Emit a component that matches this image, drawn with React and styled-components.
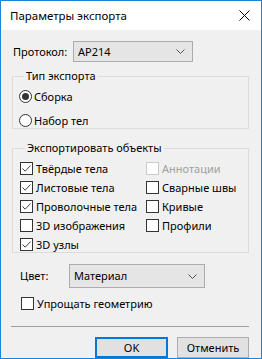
import React from "react";
import styled, { createGlobalStyle } from "styled-components";

const GlobalStyle = createGlobalStyle`
  html, body {
    margin: 0;
    padding: 0;
    background: #ffffff;
  }
  body {
    font-family: "Noto Sans", "Liberation Sans", sans-serif;
    font-size: 11px;
    color: #000000;
  }
  * {
    box-sizing: border-box;
  }
`;

const Window = styled.div`
  width: 262px;
  height: 359px;
  border: 1px solid #1883d7;
  background: #f0f0f0;
  display: flex;
  flex-direction: column;
`;

const TitleBar = styled.div`
  height: 29px;
  background: #ffffff;
  display: flex;
  align-items: center;
  justify-content: space-between;
  padding-left: 9px;
`;

const Title = styled.span`
  font-size: 11.5px;
  line-height: 16px;
`;

const CloseButton = styled.div`
  width: 34px;
  height: 29px;
  display: flex;
  align-items: center;
  justify-content: center;
`;

const Body = styled.div`
  padding: 10px 12px 0 10px;
  display: flex;
  flex-direction: column;
`;

const FieldRow = styled.div`
  display: flex;
  align-items: center;
  padding-left: ${(p) => p.$indent || 0}px;
  margin-top: ${(p) => p.$top || 0}px;
`;

const Label = styled.span`
  width: ${(p) => p.$width}px;
  line-height: 16px;
`;

const Select = styled.div`
  width: ${(p) => p.$width}px;
  height: ${(p) => p.$height}px;
  background: #e5e5e5;
  border: 1px solid #acacac;
  display: flex;
  align-items: center;
  justify-content: space-between;
  padding: 0 7px 0 4px;
  line-height: 16px;
`;

const Group = styled.fieldset`
  margin: ${(p) => p.$top}px 0 0 1px;
  padding: ${(p) => p.$pad};
  border: 1px solid #dcdcdc;
  min-width: 0;
  height: ${(p) => p.$height}px;
`;

const Legend = styled.legend`
  margin-left: 5px;
  padding: 0 2px;
  line-height: 16px;
`;

const Option = styled.label`
  display: flex;
  align-items: center;
  height: ${(p) => p.$height || 19}px;
  color: ${(p) => (p.$disabled ? "#a0a0a0" : "#000000")};
  white-space: nowrap;
`;

const RadioCircle = styled.span`
  width: 13px;
  height: 13px;
  border: 1px solid #333333;
  border-radius: 50%;
  background: #ffffff;
  display: flex;
  align-items: center;
  justify-content: center;
  margin-right: 2px;
  flex-shrink: 0;
  &::after {
    content: "";
    display: ${(p) => (p.$checked ? "block" : "none")};
    width: 7px;
    height: 7px;
    border-radius: 50%;
    background: #333333;
  }
`;

const Box = styled.span`
  width: 13px;
  height: 13px;
  border: 1px solid ${(p) => (p.$disabled ? "#cccccc" : "#333333")};
  background: #ffffff;
  display: flex;
  align-items: center;
  justify-content: center;
  margin-right: 3px;
  flex-shrink: 0;
`;

const CheckGrid = styled.div`
  display: grid;
  grid-template-columns: 126px 1fr;
  grid-auto-rows: 19px;
`;

const Separator = styled.div`
  height: 1px;
  background: #a0a0a0;
  margin: 13px 0 0 0;
`;

const Buttons = styled.div`
  display: flex;
  justify-content: flex-end;
  gap: 9px;
  margin-top: 10px;
`;

const Button = styled.div`
  width: ${(p) => p.$width}px;
  height: 21px;
  background: #e1e1e1;
  border: ${(p) => (p.$default ? "2px solid #0078d7" : "1px solid #adadad")};
  display: flex;
  align-items: center;
  justify-content: center;
  line-height: 16px;
`;

const Check = ({ checked, disabled, children }) => (
  <Option $disabled={disabled}>
    <Box $disabled={disabled}>
      {checked && (
        <svg width="11" height="11" viewBox="0 0 11 11">
          <path d="M1.5 5.5 L4.2 8.2 L9.5 2.5" fill="none" stroke="#444" strokeWidth="1" />
        </svg>
      )}
    </Box>
    {children}
  </Option>
);

const Radio = ({ checked, children }) => (
  <Option $height={24}>
    <RadioCircle $checked={checked} />
    {children}
  </Option>
);

const Chevron = () => (
  <svg width="9" height="5" viewBox="0 0 9 5">
    <path d="M0.5 0.5 L4.5 4.5 L8.5 0.5" fill="none" stroke="#555" strokeWidth="1" />
  </svg>
);

export default function App() {
  return (
    <>
      <GlobalStyle />
      <Window>
        <TitleBar>
          <Title>Параметры экспорта</Title>
          <CloseButton>
            <svg width="11" height="11" viewBox="0 0 11 11">
              <path d="M0.5 0.5 L10.5 10.5 M10.5 0.5 L0.5 10.5" stroke="#000" strokeWidth="1" />
            </svg>
          </CloseButton>
        </TitleBar>
        <Body>
          <FieldRow $indent={2} $top={1}>
            <Label $width={60}>Протокол:</Label>
            <Select $width={120} $height={21}>
              <span>AP214</span>
              <Chevron />
            </Select>
          </FieldRow>

          <Group $top={6} $height={61} $pad="0 0 0 6px">
            <Legend>Тип экспорта</Legend>
            <Radio checked>Сборка</Radio>
            <Radio>Набор тел</Radio>
          </Group>

          <Group $top={11} $height={113} $pad="3px 0 0 7px">
            <Legend>Экспортировать объекты</Legend>
            <CheckGrid>
              <Check checked>Твёрдые тела</Check>
              <Check disabled>Аннотации</Check>
              <Check checked>Листовые тела</Check>
              <Check>Сварные швы</Check>
              <Check checked>Проволочные тела</Check>
              <Check>Кривые</Check>
              <Check>3D изображения</Check>
              <Check>Профили</Check>
              <Check checked>3D узлы</Check>
            </CheckGrid>
          </Group>

          <FieldRow $indent={9} $top={11}>
            <Label $width={49}>Цвет:</Label>
            <Select $width={136} $height={24}>
              <span>Материал</span>
              <Chevron />
            </Select>
          </FieldRow>

          <FieldRow $indent={10} $top={6}>
            <Check>Упрощать геометрию</Check>
          </FieldRow>

          <Separator />

          <Buttons>
            <Button $width={73} $default>OK</Button>
            <Button $width={72}>Отменить</Button>
          </Buttons>
        </Body>
      </Window>
    </>
  );
}
